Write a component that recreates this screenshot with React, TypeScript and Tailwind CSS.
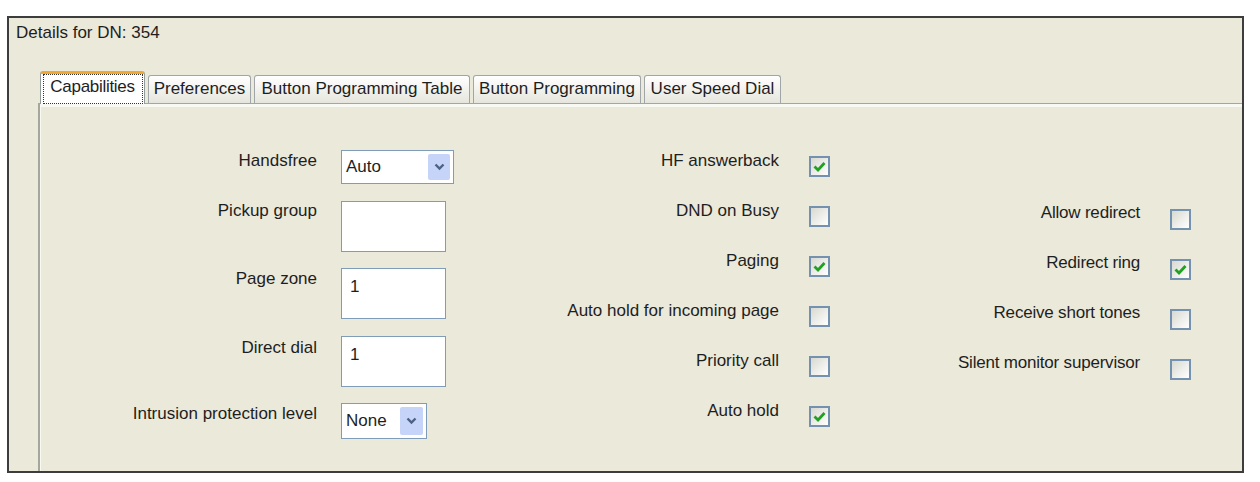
import React from "react";

const FONT = "font-['Liberation_Sans',Arial,sans-serif]";

const Chevron = () => (
  <svg width="11" height="8" viewBox="0 0 11 8">
    <path d="M1.5 1.5 L5.5 5.5 L9.5 1.5" fill="none" stroke="#4d6185" strokeWidth="2.4" />
  </svg>
);

const Select = ({ value, w, h, arrow }: { value: string; w: string; h: string; arrow: string }) => (
  <div className={`${w} ${h} border border-[#7f9db9] bg-white flex items-center justify-between pl-[4px] pr-[3px]`}>
    <span>{value}</span>
    <div className={`${arrow} h-[calc(100%-6px)] rounded-[2px] bg-[#c5d4f8] flex items-center justify-center`}>
      <Chevron />
    </div>
  </div>
);

const TextBox = ({ value }: { value?: string }) => (
  <div className="w-[105px] h-[51px] border border-[#7f9db9] bg-white pl-[8px] pt-[8px]">{value}</div>
);

const Check = ({ on }: { on?: boolean }) => (
  <div className="w-[21px] h-[21px] border-2 border-[#7491b0] bg-linear-to-br from-[#d9d9d1] to-white flex items-center justify-center">
    {on && (
      <svg width="13" height="11" viewBox="0 0 13 11">
        <path d="M1.5 5.5 L5 9 L11.5 2" fill="none" stroke="#21a121" strokeWidth="2.8" />
      </svg>
    )}
  </div>
);

const TABS = [
  { label: "Preferences", w: "w-[103px]" },
  { label: "Button Programming Table", w: "w-[216px]" },
  { label: "Button Programming", w: "w-[168px]" },
  { label: "User Speed Dial", w: "w-[137px]" },
];

const MIDDLE = [
  { label: "HF answerback", on: true },
  { label: "DND on Busy", on: false },
  { label: "Paging", on: true },
  { label: "Auto hold for incoming page", on: false },
  { label: "Priority call", on: false },
  { label: "Auto hold", on: true },
];

const RIGHT = [
  { label: "Allow redirect", on: false },
  { label: "Redirect ring", on: true },
  { label: "Receive short tones", on: false },
  { label: "Silent monitor supervisor", on: false },
];

export default function App() {
  return (
    <div className={`w-[1260px] h-[482px] bg-white pt-[16px] pl-[7px] text-[17px] leading-[20px] text-[#1e1e1e] ${FONT}`}>
      <div className="w-[1237px] h-[457px] border-2 border-[#3d3d3d] bg-[#ebe9da] flex flex-col overflow-hidden">
        <div className="pl-[7px] pt-[5px]">Details for DN: 354</div>

        <div className="ml-[29px] mt-[28px] flex flex-col flex-1">
          {/* tab strip */}
          <div className="flex items-end h-[32px] pl-[2px]">
            <div className="relative z-10 -mb-[1px] w-[105px] h-[33px] bg-white border-t-[3px] border-x border-t-[#f2a833] border-x-[#919b9c] rounded-t-[3px] flex justify-center pt-[1px]">
              <span className="h-[28px] pt-[2px] outline-1 outline-dotted outline-[#333] w-[98px] text-center tracking-[-0.3px]">
                Capabilities
              </span>
            </div>
            {TABS.map((t) => (
              <div
                key={t.label}
                className={`${t.w} ml-[3px] h-[28px] border-t border-x border-[#a0a6a8] rounded-t-[3px] bg-linear-to-b from-white to-[#e6e5dd] text-center pt-[3px] whitespace-nowrap`}
              >
                {t.label}
              </div>
            ))}
          </div>

          {/* tab panel */}
          <div className="flex-1 border-t border-l-2 border-[#a7a69b]">
            <div className="h-full border-t-[3px] border-l border-[#f9f9f4] flex items-start">
              {/* left column */}
              <div className="w-[413px] pt-[43px] flex flex-col">
                <div className="flex items-start">
                  <div className="w-[276px] text-right mt-[1px]">Handsfree</div>
                  <div className="ml-[24px]">
                    <Select value="Auto" w="w-[113px]" h="h-[34px]" arrow="w-[22px]" />
                  </div>
                </div>
                <div className="flex items-start mt-[17px]">
                  <div className="w-[276px] text-right">Pickup group</div>
                  <div className="ml-[24px]">
                    <TextBox />
                  </div>
                </div>
                <div className="flex items-start mt-[16px]">
                  <div className="w-[276px] text-right mt-[1px]">Page zone</div>
                  <div className="ml-[24px]">
                    <TextBox value="1" />
                  </div>
                </div>
                <div className="flex items-start mt-[17px]">
                  <div className="w-[276px] text-right mt-[2px]">Direct dial</div>
                  <div className="ml-[24px]">
                    <TextBox value="1" />
                  </div>
                </div>
                <div className="flex items-start mt-[16px]">
                  <div className="w-[276px] text-right mt-[1px] whitespace-nowrap">Intrusion protection level</div>
                  <div className="ml-[24px]">
                    <Select value="None" w="w-[86px]" h="h-[36px]" arrow="w-[23px]" />
                  </div>
                </div>
              </div>

              {/* middle column */}
              <div className="pt-[44px] flex flex-col">
                {MIDDLE.map((r) => (
                  <div key={r.label} className="h-[50px] flex items-start">
                    <div className="w-[325px] text-right whitespace-nowrap">{r.label}</div>
                    <div className="ml-[30px] mt-[5px]">
                      <Check on={r.on} />
                    </div>
                  </div>
                ))}
              </div>

              {/* right column */}
              <div className="pt-[96px] flex flex-col">
                {RIGHT.map((r) => (
                  <div key={r.label} className="h-[50px] flex items-start">
                    <div className="w-[310px] text-right whitespace-nowrap tracking-[-0.2px]">{r.label}</div>
                    <div className="ml-[30px] mt-[6px]">
                      <Check on={r.on} />
                    </div>
                  </div>
                ))}
              </div>
            </div>
          </div>
        </div>
      </div>
    </div>
  );
}
